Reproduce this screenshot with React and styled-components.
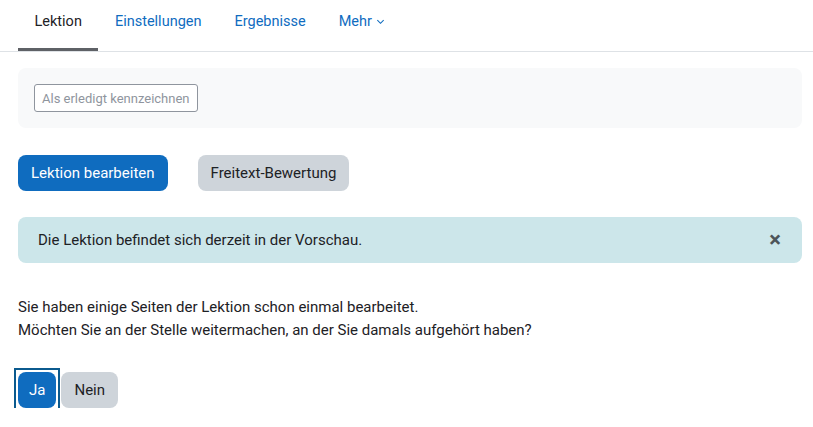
import styled, { createGlobalStyle } from 'styled-components'

const GlobalStyle = createGlobalStyle`
  body {
    margin: 0;
    background: #fff;
    font-family: Roboto, "Noto Sans", sans-serif;
    font-size: 15px;
    color: #1d2125;
  }
`

const Page = styled.div`
  width: 813px;
`

const TabBar = styled.nav`
  display: flex;
  height: 51px;
  padding-left: 18px;
  border-bottom: 1px solid #dee2e6;
`

const Tab = styled.a`
  display: flex;
  align-items: center;
  gap: 4px;
  height: 100%;
  box-sizing: border-box;
  padding: 0 16.5px 5px;
  font-size: 14.5px;
  color: ${(p) => (p.$active ? '#1d2125' : '#0f6cbf')};
  border-bottom: 3px solid ${(p) => (p.$active ? '#5e6166' : 'transparent')};
  text-decoration: none;
`

const Content = styled.main`
  padding: 16px 11px 0 18px;
  display: flex;
  flex-direction: column;
`

const ActivityBox = styled.div`
  display: flex;
  background: #f8f9fa;
  border-radius: 8px;
  padding: 16px;
`

const OutlineButton = styled.button`
  font-family: inherit;
  font-size: 13px;
  color: #8f959e;
  background: #fff;
  border: 1px solid #8f959e;
  border-radius: 3px;
  height: 28px;
  padding: 0 7px;
`

const ButtonRow = styled.div`
  display: flex;
  align-items: center;
  gap: ${(p) => p.$gap ?? 30}px;
  margin-top: ${(p) => p.$top ?? 27}px;
`

const Button = styled.button`
  font-family: inherit;
  font-size: 15px;
  height: 36px;
  padding: 0 ${(p) => p.$pad ?? 13}px;
  border: none;
  border-radius: 8px;
  background: ${(p) => (p.$primary ? '#0f6cbf' : '#ced4da')};
  color: ${(p) => (p.$primary ? '#fff' : '#1d2125')};
`

const FocusRing = styled.span`
  display: inline-flex;
  margin: -4px;
  padding: 2px;
  border: 2px solid #0b5a8e;
`

const Alert = styled.div`
  display: flex;
  align-items: center;
  justify-content: space-between;
  margin-top: 26px;
  height: 46px;
  padding: 0 20px;
  background: #cce6ea;
  border-radius: 8px;
  color: #1d2125;
`

const Close = styled.span`
  font-size: 22px;
  font-weight: 700;
  color: #4d5459;
  line-height: 1;
  margin-right: 1px;
`

const Text = styled.p`
  margin: 33px 0 0;
  line-height: 23px;
`

export default function App() {
  return (
    <Page>
      <GlobalStyle />
      <TabBar>
        <Tab $active>Lektion</Tab>
        <Tab>Einstellungen</Tab>
        <Tab>Ergebnisse</Tab>
        <Tab>
          Mehr
          <svg width="9" height="9" viewBox="0 0 10 10">
            <path d="M1.5 3.5 L5 7 L8.5 3.5" fill="none" stroke="#0f6cbf" strokeWidth="1.2" />
          </svg>
        </Tab>
      </TabBar>
      <Content>
        <ActivityBox>
          <OutlineButton disabled>Als erledigt kennzeichnen</OutlineButton>
        </ActivityBox>
        <ButtonRow>
          <Button $primary>Lektion bearbeiten</Button>
          <Button>Freitext-Bewertung</Button>
        </ButtonRow>
        <Alert>
          <span>Die Lektion befindet sich derzeit in der Vorschau.</span>
          <Close>×</Close>
        </Alert>
        <Text>
          Sie haben einige Seiten der Lektion schon einmal bearbeitet.
          <br />
          Möchten Sie an der Stelle weitermachen, an der Sie damals aufgehört haben?
        </Text>
        <ButtonRow $gap={5} $top={30}>
          <FocusRing>
            <Button $primary $pad={11}>Ja</Button>
          </FocusRing>
          <Button $pad={13}>Nein</Button>
        </ButtonRow>
      </Content>
    </Page>
  )
}
